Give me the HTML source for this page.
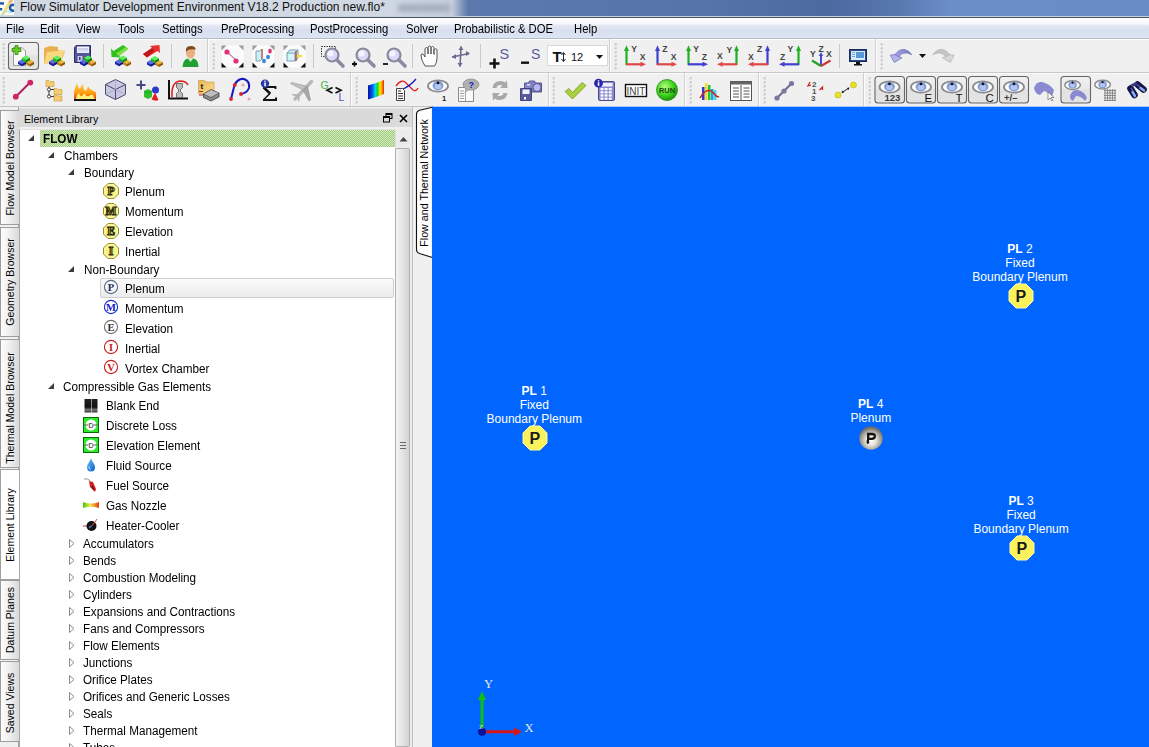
<!DOCTYPE html>
<html><head><meta charset="utf-8"><style>
*{box-sizing:border-box;margin:0;padding:0}
html,body{width:1149px;height:747px;overflow:hidden;background:#f0f0f0;font-family:"Liberation Sans",sans-serif;font-size:12px;color:#000;position:relative}
.a{position:absolute}
svg{position:absolute;overflow:visible}
#title{left:0;top:0;width:1149px;height:18px;background:linear-gradient(90deg,#d2dae4 0px,#d0d8e3 385px,#c6cfdc 452px,#8ea2c2 460px,#5b79ad 468px,#5574aa 700px,#4a6aa0 830px,#5878b0 900px,#6c8ec6 950px,#6a8cc4 1149px);}
#title .t{left:20px;top:0px;font:12px/14px "Liberation Sans";color:#111;white-space:nowrap}
#tline{left:0;top:16px;width:1149px;height:2px;background:linear-gradient(#c6d2e4 0 1px,#4a525c 1px 2px)}
#menu{left:0;top:18px;width:1149px;height:21px;background:linear-gradient(#ffffff 0px,#f6f8fb 6px,#e4e9f3 7px,#d8dfee 12px,#dce3f2 19px,#dee5f3 20px);border-bottom:1px solid #b4b9c6;box-shadow:0 1px 0 #ffffff}
#menu span{position:absolute;top:3.5px;font:12px/14px "Liberation Sans";white-space:nowrap;transform:scaleX(0.94);transform-origin:0 0}
.tb{background:#f0f0f0}
.vsep{position:absolute;width:1px;background:#c9c9c9}
.gb{position:absolute;width:2px;border-left:1px solid #d2d2d2;border-right:1px solid #fbfbfb}
.grip{position:absolute;width:3px;background:repeating-linear-gradient(180deg,#a0a0a0 0 2px,transparent 2px 4px)}
.pbtn{position:absolute;border:1px solid #777;border-radius:3px;background:linear-gradient(#f6f6f6,#dcdcdc)}
.vtab{position:absolute;left:0px;width:18.5px;border:1px solid #9c9c9c;border-right:none;background:linear-gradient(90deg,#fdfdfd 0%,#eeeeee 50%,#d9d9d9 100%)}
.vtab span{position:absolute;left:50%;top:50%;transform:translate(-50%,-50%) rotate(-90deg);white-space:nowrap;font:10.5px/12px "Liberation Sans"}
.row{position:absolute;white-space:nowrap;font:12.3px/14px "Liberation Sans";transform:scaleX(0.951);transform-origin:0 0}
.lbl{position:absolute;color:#fff;font:12px/14px "Liberation Sans";text-align:center;white-space:nowrap;width:200px}
</style></head><body>
<div id="title" class="a"><span class="a t">Flow Simulator Development Environment V18.2 Production new.flo*</span></div>
<svg style="left:0;top:0" width="14" height="16" viewBox="0 0 14 16"><rect x="0" y="0" width="14" height="15" fill="#fbfaf0"/><path d="M9.5 0 L13 0 L4 15 L1 15Z" fill="#f4d86a" opacity="0.9"/><path d="M10 0 h3 l-2 3 h-3z" fill="#f0b080"/><rect x="0" y="2.2" width="4" height="2.4" fill="#1a5aa8"/><rect x="0" y="8" width="2.2" height="2.4" fill="#1a5aa8"/><path d="M14 5.2 Q10.5 4 10 7.8 Q10.5 11.4 14 10.4" stroke="#1a5aa8" stroke-width="2.6" fill="none"/><path d="M1 15 L5 11 L12 13" stroke="#9ae0f0" stroke-width="1" fill="none"/></svg>
<div class="a" style="left:398px;top:4px;width:52px;height:8px;background:#9aa6b8;filter:blur(2.5px);opacity:0.8"></div>
<div id="tline" class="a"></div>
<div id="menu" class="a"><span style="left:6px">File</span><span style="left:40px">Edit</span><span style="left:76px">View</span><span style="left:117.5px">Tools</span><span style="left:162.4px">Settings</span><span style="left:220.6px">PreProcessing</span><span style="left:310px">PostProcessing</span><span style="left:406px">Solver</span><span style="left:454px">Probabilistic &amp; DOE</span><span style="left:574px">Help</span></div>
<div class="a tb" style="left:0;top:40px;width:1149px;height:33px;border-bottom:1px solid #c8c8c8"></div>
<div class="a tb" style="left:0;top:73px;width:1149px;height:34px;border-bottom:1px solid #c4c4c4;border-top:1px solid #fcfcfc"></div><div class="a" style="left:432px;top:106px;width:717px;height:1px;background:#a8ccff"></div>
<svg style="left:0;top:38px" width="1149" height="69" viewBox="0 38 1149 69">
<defs><linearGradient id="pg" x1="0" y1="0" x2="0" y2="1"><stop offset="0" stop-color="#f0f0f0"/><stop offset="0.45" stop-color="#ebebeb"/><stop offset="0.5" stop-color="#e2e2e2"/><stop offset="1" stop-color="#e4e4e4"/></linearGradient><linearGradient id="fold" x1="0" y1="0" x2="1" y2="1"><stop offset="0" stop-color="#e8b45a"/><stop offset="1" stop-color="#fbe08a"/></linearGradient><linearGradient id="spec" x1="0" y1="0" x2="1" y2="0"><stop offset="0" stop-color="#0010a0"/><stop offset="0.3" stop-color="#0060ff"/><stop offset="0.45" stop-color="#00e0e0"/><stop offset="0.6" stop-color="#20d020"/><stop offset="0.75" stop-color="#f0f000"/><stop offset="0.9" stop-color="#ff8000"/><stop offset="1" stop-color="#e02000"/></linearGradient><radialGradient id="run" cx="0.4" cy="0.35" r="0.7"><stop offset="0" stop-color="#b8ff80"/><stop offset="0.6" stop-color="#3ad01a"/><stop offset="1" stop-color="#1a8a0a"/></radialGradient><linearGradient id="fire" x1="0" y1="0" x2="0" y2="1"><stop offset="0" stop-color="#ffd040"/><stop offset="0.6" stop-color="#ff9a10"/><stop offset="1" stop-color="#e03a00"/></linearGradient><linearGradient id="und" x1="0" y1="0" x2="1" y2="0"><stop offset="0" stop-color="#a8a8e8"/><stop offset="1" stop-color="#7878c0"/></linearGradient></defs>
<rect x="2.5" y="43.5" width="2" height="2" fill="#d2d2d2"/><rect x="3.5" y="43.5" width="1" height="1" fill="#a4a4a4"/><rect x="2.5" y="47.5" width="2" height="2" fill="#d2d2d2"/><rect x="3.5" y="47.5" width="1" height="1" fill="#a4a4a4"/><rect x="2.5" y="51.5" width="2" height="2" fill="#d2d2d2"/><rect x="3.5" y="51.5" width="1" height="1" fill="#a4a4a4"/><rect x="2.5" y="55.5" width="2" height="2" fill="#d2d2d2"/><rect x="3.5" y="55.5" width="1" height="1" fill="#a4a4a4"/><rect x="2.5" y="59.5" width="2" height="2" fill="#d2d2d2"/><rect x="3.5" y="59.5" width="1" height="1" fill="#a4a4a4"/><rect x="2.5" y="63.5" width="2" height="2" fill="#d2d2d2"/><rect x="3.5" y="63.5" width="1" height="1" fill="#a4a4a4"/><rect x="2.5" y="67.5" width="2" height="2" fill="#d2d2d2"/><rect x="3.5" y="67.5" width="1" height="1" fill="#a4a4a4"/>
<rect x="8.5" y="42.5" width="30" height="27" rx="3" fill="url(#pg)" stroke="#666" stroke-width="1.1"/>
<path d="M13.5 47.5 H22 L25.5 51 V65.5 H13.5Z" fill="#fafafa" stroke="#9a9a9a" stroke-width="1"/>
<path d="M15 45.5 h3 v3 h3 v3 h-3 v3 h-3 v-3 h-3 v-3 h3z" fill="#66cc22" stroke="#3a8a10" stroke-width="0.8"/>
<g transform="translate(18,55.5)"><path d="M0 6.0 L4 3.8 L8 6.0 L4 8.2Z" fill="#5a6af0"/><path d="M0 6.0 V8.6 L4 10.8 V8.2Z" fill="#1a22b0"/><path d="M8 6.0 V8.6 L4 10.8 V8.2Z" fill="#10188a"/><path d="M8 6.2 L12 4 L16 6.2 L12 8.4Z" fill="#f2b440"/><path d="M8 6.2 V8.8 L12 11 V8.4Z" fill="#c07810"/><path d="M16 6.2 V8.8 L12 11 V8.4Z" fill="#8a5a08"/><path d="M4 2.2 L8 0 L12 2.2 L8 4.4Z" fill="#5cf05c"/><path d="M4 2.2 V4.8 L8 7 V4.4Z" fill="#18b818"/><path d="M12 2.2 V4.8 L8 7 V4.4Z" fill="#0e860e"/></g>
<path d="M44 48 L50 46 L58 47 V50 L65 52 L60 64 H44Z" fill="#e8b050"/><path d="M47 52 L65 50 L60 64 H44Z" fill="#f8d880"/>
<g transform="translate(49,55.5)"><path d="M0 6.0 L4 3.8 L8 6.0 L4 8.2Z" fill="#5a6af0"/><path d="M0 6.0 V8.6 L4 10.8 V8.2Z" fill="#1a22b0"/><path d="M8 6.0 V8.6 L4 10.8 V8.2Z" fill="#10188a"/><path d="M8 6.2 L12 4 L16 6.2 L12 8.4Z" fill="#f2b440"/><path d="M8 6.2 V8.8 L12 11 V8.4Z" fill="#c07810"/><path d="M16 6.2 V8.8 L12 11 V8.4Z" fill="#8a5a08"/><path d="M4 2.2 L8 0 L12 2.2 L8 4.4Z" fill="#5cf05c"/><path d="M4 2.2 V4.8 L8 7 V4.4Z" fill="#18b818"/><path d="M12 2.2 V4.8 L8 7 V4.4Z" fill="#0e860e"/></g>
<path d="M74.5 47.5 L76 45.5 H90.5 V62.5 H74.5Z" fill="#545498" stroke="#2e2e6a" stroke-width="1"/><rect x="77" y="46.5" width="12" height="6.5" fill="#f2f2ff"/><rect x="78" y="48.5" width="10" height="1" fill="#a8a8d8"/><rect x="78" y="50.5" width="10" height="1" fill="#c8c8e8"/><rect x="77.5" y="56" width="5" height="6" fill="#c8c8e0"/><rect x="79" y="57" width="1.5" height="3" fill="#3a3a78"/>
<g transform="translate(80,55.5)"><path d="M0 6.0 L4 3.8 L8 6.0 L4 8.2Z" fill="#5a6af0"/><path d="M0 6.0 V8.6 L4 10.8 V8.2Z" fill="#1a22b0"/><path d="M8 6.0 V8.6 L4 10.8 V8.2Z" fill="#10188a"/><path d="M8 6.2 L12 4 L16 6.2 L12 8.4Z" fill="#f2b440"/><path d="M8 6.2 V8.8 L12 11 V8.4Z" fill="#c07810"/><path d="M16 6.2 V8.8 L12 11 V8.4Z" fill="#8a5a08"/><path d="M4 2.2 L8 0 L12 2.2 L8 4.4Z" fill="#5cf05c"/><path d="M4 2.2 V4.8 L8 7 V4.4Z" fill="#18b818"/><path d="M12 2.2 V4.8 L8 7 V4.4Z" fill="#0e860e"/></g>
<rect x="103" y="44" width="1" height="24" fill="#c8c8c8"/>
<path d="M126 47 L128 49 L119 56 L121.5 57.5 L111.5 57 L111 48.5 L113.5 51 L123 45Z" fill="#30c020"/><path d="M126 47 L128 49 L119 56 L116 53.5Z" fill="#80e040"/>
<g transform="translate(115,55.5)"><path d="M0 6.0 L4 3.8 L8 6.0 L4 8.2Z" fill="#5a6af0"/><path d="M0 6.0 V8.6 L4 10.8 V8.2Z" fill="#1a22b0"/><path d="M8 6.0 V8.6 L4 10.8 V8.2Z" fill="#10188a"/><path d="M8 6.2 L12 4 L16 6.2 L12 8.4Z" fill="#f2b440"/><path d="M8 6.2 V8.8 L12 11 V8.4Z" fill="#c07810"/><path d="M16 6.2 V8.8 L12 11 V8.4Z" fill="#8a5a08"/><path d="M4 2.2 L8 0 L12 2.2 L8 4.4Z" fill="#5cf05c"/><path d="M4 2.2 V4.8 L8 7 V4.4Z" fill="#18b818"/><path d="M12 2.2 V4.8 L8 7 V4.4Z" fill="#0e860e"/></g>
<path d="M143 54 L152 48 L150 46 L159.5 45 L160 53 L157.5 51 L147 57.5Z" fill="#e83030"/><path d="M143 54 L152 48 L154.5 50.5 L147 57.5Z" fill="#c01818"/>
<g transform="translate(147,56)"><path d="M0 6.0 L4 3.8 L8 6.0 L4 8.2Z" fill="#5a6af0"/><path d="M0 6.0 V8.6 L4 10.8 V8.2Z" fill="#1a22b0"/><path d="M8 6.0 V8.6 L4 10.8 V8.2Z" fill="#10188a"/><path d="M8 6.2 L12 4 L16 6.2 L12 8.4Z" fill="#f2b440"/><path d="M8 6.2 V8.8 L12 11 V8.4Z" fill="#c07810"/><path d="M16 6.2 V8.8 L12 11 V8.4Z" fill="#8a5a08"/><path d="M4 2.2 L8 0 L12 2.2 L8 4.4Z" fill="#5cf05c"/><path d="M4 2.2 V4.8 L8 7 V4.4Z" fill="#18b818"/><path d="M12 2.2 V4.8 L8 7 V4.4Z" fill="#0e860e"/></g>
<rect x="171" y="44" width="1" height="24" fill="#c8c8c8"/>
<ellipse cx="190.5" cy="53" rx="4.6" ry="5.4" fill="#e8b080"/><path d="M186 52 Q185 46 190.5 46 Q196 46 195.5 50 Q193 48.5 188 50Z" fill="#7a4a20"/>
<path d="M182.5 67 Q183 59 188 58.5 L190.5 61 L193 58.5 Q198.5 59 198.5 67Z" fill="#20a030"/><path d="M188 58.5 L190.5 62 L193 58.5Z" fill="#c8f0c8"/>
<rect x="207" y="39" width="1" height="33" fill="#cfcfcf"/><rect x="208" y="39" width="1" height="33" fill="#fdfdfd"/>
<rect x="212.5" y="43.5" width="2" height="2" fill="#d2d2d2"/><rect x="213.5" y="43.5" width="1" height="1" fill="#a4a4a4"/><rect x="212.5" y="47.5" width="2" height="2" fill="#d2d2d2"/><rect x="213.5" y="47.5" width="1" height="1" fill="#a4a4a4"/><rect x="212.5" y="51.5" width="2" height="2" fill="#d2d2d2"/><rect x="213.5" y="51.5" width="1" height="1" fill="#a4a4a4"/><rect x="212.5" y="55.5" width="2" height="2" fill="#d2d2d2"/><rect x="213.5" y="55.5" width="1" height="1" fill="#a4a4a4"/><rect x="212.5" y="59.5" width="2" height="2" fill="#d2d2d2"/><rect x="213.5" y="59.5" width="1" height="1" fill="#a4a4a4"/><rect x="212.5" y="63.5" width="2" height="2" fill="#d2d2d2"/><rect x="213.5" y="63.5" width="1" height="1" fill="#a4a4a4"/><rect x="212.5" y="67.5" width="2" height="2" fill="#d2d2d2"/><rect x="213.5" y="67.5" width="1" height="1" fill="#a4a4a4"/>
<g transform="translate(221,45)"><rect x="0.5" y="0.5" width="22" height="22" fill="#fbfbfb"/><path d="M0.5 0.5h5l-5 5z" fill="#9a9a9a"/><path d="M22.5 0.5h-5l5 5z" fill="#9a9a9a"/><path d="M0.5 22.5h5l-5-5z" fill="#111"/><path d="M22.5 22.5h-5l5-5z" fill="#111"/></g>
<path d="M226 51 L237 61" stroke="#a04070" stroke-width="1"/><circle cx="227" cy="52" r="2.6" fill="#e0307a"/><circle cx="236" cy="61" r="2.6" fill="#e0307a"/>
<g transform="translate(252,45)"><rect x="0.5" y="0.5" width="22" height="22" fill="#fbfbfb"/><path d="M0.5 0.5h5l-5 5z" fill="#9a9a9a"/><path d="M22.5 0.5h-5l5 5z" fill="#9a9a9a"/><path d="M0.5 22.5h5l-5-5z" fill="#111"/><path d="M22.5 22.5h-5l5-5z" fill="#111"/></g>
<path d="M256 51 h4 l2 -2 v10 l-2 2 h-4z" fill="#c8f0f8" stroke="#6a8aa0" stroke-width="0.8"/><path d="M262 49 v10" stroke="#d04020" stroke-width="1"/><ellipse cx="270" cy="51" rx="1.8" ry="2.5" fill="#e0307a"/><ellipse cx="268" cy="57" rx="2" ry="2.3" fill="#3a8ae0"/><ellipse cx="264" cy="61" rx="2" ry="2.3" fill="#3a8ae0"/>
<g transform="translate(283,45)"><rect x="0.5" y="0.5" width="22" height="22" fill="#fbfbfb"/><path d="M0.5 0.5h5l-5 5z" fill="#9a9a9a"/><path d="M22.5 0.5h-5l5 5z" fill="#9a9a9a"/><path d="M0.5 22.5h5l-5-5z" fill="#111"/><path d="M22.5 22.5h-5l5-5z" fill="#111"/></g>
<path d="M287 53 l3 -3 h8 v8 l-3 3 h-8z" fill="#d0f4fa" stroke="#5a8aa0" stroke-width="0.8"/><path d="M287 53 h8 v8 M295 53 l3 -3" stroke="#5a8aa0" stroke-width="0.8" fill="none"/><path d="M296 51 v10" stroke="#d02020" stroke-width="1.2"/><path d="M297 55 h4 l2 1 l-2 1 h-4" fill="#f0e020"/>
<rect x="313" y="44" width="1" height="24" fill="#c8c8c8"/>
<rect x="321.5" y="46.5" width="14" height="10" fill="none" stroke="#222" stroke-width="1" stroke-dasharray="1.3 1.2"/>
<g transform="translate(323,46)"><circle cx="9" cy="9" r="6.5" fill="#d8d8f8" stroke="#8a8a9a" stroke-width="2.2"/><circle cx="7.5" cy="7.5" r="3" fill="#f4f4ff"/><path d="M14 14 L20 20" stroke="#8a8aa0" stroke-width="3.6" stroke-linecap="round"/></g>
<g transform="translate(354,46)"><circle cx="9" cy="9" r="6.5" fill="#d8d8f8" stroke="#8a8a9a" stroke-width="2.2"/><circle cx="7.5" cy="7.5" r="3" fill="#f4f4ff"/><path d="M14 14 L20 20" stroke="#8a8aa0" stroke-width="3.6" stroke-linecap="round"/></g>
<path d="M352 64 h5 M354.5 61.5 v5" stroke="#111" stroke-width="1.8"/>
<g transform="translate(385,46)"><circle cx="9" cy="9" r="6.5" fill="#d8d8f8" stroke="#8a8a9a" stroke-width="2.2"/><circle cx="7.5" cy="7.5" r="3" fill="#f4f4ff"/><path d="M14 14 L20 20" stroke="#8a8aa0" stroke-width="3.6" stroke-linecap="round"/></g>
<path d="M383 64 h5" stroke="#111" stroke-width="1.8"/>
<rect x="412" y="44" width="1" height="24" fill="#c8c8c8"/>
<path d="M425 66 Q421 60 421 55 Q421.5 53 423.5 54.5 L425 57 V48.5 Q426.5 46.5 428 48.5 V54 V47 Q429.5 45 431 47 V54 V47.5 Q432.5 45.5 434 47.5 V54.5 V49.5 Q435.5 48 437 49.5 V58 Q437 63 434.5 66Z" fill="#fff" stroke="#555" stroke-width="1"/>
<path d="M452 57 L469 53.5 M461 46.5 L460 66.5" stroke="#6a6a90" stroke-width="1.6"/><path d="M452 57 l4 -3 v5z M470 53.5 l-4 -2.5 v5z M461 46 l-2.5 4 h5z M460 67 l-2.5 -4 h5z" fill="#6a6a90"/>
<rect x="480" y="44" width="1" height="24" fill="#c8c8c8"/>
<path d="M489.5 63.5 h10 M494.5 58.5 v10" stroke="#111" stroke-width="2.6"/><text x="499.5" y="58.5" font-family="Liberation Sans" font-size="14.5" fill="#5a5aa0">S</text>
<path d="M521 62.7 h8" stroke="#111" stroke-width="2.4"/><text x="531" y="58.5" font-family="Liberation Sans" font-size="14" fill="#5a5aa0">S</text>
<rect x="547.5" y="45.5" width="60" height="20" fill="#fff" stroke="#d8d8d8" stroke-width="1"/>
<text x="552.5" y="62" font-family="Liberation Sans" font-weight="bold" font-size="15" fill="#111">T</text><path d="M563.5 53 v8 M561.5 55 l2 -2.5 l2 2.5 M561.5 59 l2 2.5 l2 -2.5" stroke="#111" stroke-width="0.9" fill="none"/>
<text x="571" y="61" font-family="Liberation Sans" font-size="11" fill="#111">12</text><path d="M596 55 h7 l-3.5 4z" fill="#111"/>
<rect x="609" y="39" width="1" height="33" fill="#cfcfcf"/><rect x="610" y="39" width="1" height="33" fill="#fdfdfd"/>
<rect x="614.5" y="43.5" width="2" height="2" fill="#d2d2d2"/><rect x="615.5" y="43.5" width="1" height="1" fill="#a4a4a4"/><rect x="614.5" y="47.5" width="2" height="2" fill="#d2d2d2"/><rect x="615.5" y="47.5" width="1" height="1" fill="#a4a4a4"/><rect x="614.5" y="51.5" width="2" height="2" fill="#d2d2d2"/><rect x="615.5" y="51.5" width="1" height="1" fill="#a4a4a4"/><rect x="614.5" y="55.5" width="2" height="2" fill="#d2d2d2"/><rect x="615.5" y="55.5" width="1" height="1" fill="#a4a4a4"/><rect x="614.5" y="59.5" width="2" height="2" fill="#d2d2d2"/><rect x="615.5" y="59.5" width="1" height="1" fill="#a4a4a4"/><rect x="614.5" y="63.5" width="2" height="2" fill="#d2d2d2"/><rect x="615.5" y="63.5" width="1" height="1" fill="#a4a4a4"/><rect x="614.5" y="67.5" width="2" height="2" fill="#d2d2d2"/><rect x="615.5" y="67.5" width="1" height="1" fill="#a4a4a4"/>
<g transform="translate(624,45)"><path d="M2.5 4 V20" stroke="#20b020" stroke-width="2.2"/><path d="M0 6 L2.5 0.3 L5 6Z" fill="#20b020"/><path d="M2 19.3 H18" stroke="#e04848" stroke-width="2.2"/><path d="M16.5 16.8 L22 19.3 L16.5 21.8Z" fill="#e04848"/><text x="7.2" y="6.6" font-family="Liberation Sans" font-weight="bold" font-size="8.6" fill="#444">Y</text><text x="15.8" y="15" font-family="Liberation Sans" font-weight="bold" font-size="8.6" fill="#444">X</text></g>
<g transform="translate(655,45)"><path d="M2.5 4 V20" stroke="#4040d0" stroke-width="2.2"/><path d="M0 6 L2.5 0.3 L5 6Z" fill="#4040d0"/><path d="M2 19.3 H18" stroke="#e04848" stroke-width="2.2"/><path d="M16.5 16.8 L22 19.3 L16.5 21.8Z" fill="#e04848"/><text x="7.2" y="6.6" font-family="Liberation Sans" font-weight="bold" font-size="8.6" fill="#444">Z</text><text x="15.8" y="15" font-family="Liberation Sans" font-weight="bold" font-size="8.6" fill="#444">X</text></g>
<g transform="translate(686,45)"><path d="M2.5 4 V20" stroke="#20b020" stroke-width="2.2"/><path d="M0 6 L2.5 0.3 L5 6Z" fill="#20b020"/><path d="M2 19.3 H18" stroke="#4040d0" stroke-width="2.2"/><path d="M16.5 16.8 L22 19.3 L16.5 21.8Z" fill="#4040d0"/><text x="7.2" y="6.6" font-family="Liberation Sans" font-weight="bold" font-size="8.6" fill="#444">Y</text><text x="15.8" y="15" font-family="Liberation Sans" font-weight="bold" font-size="8.6" fill="#444">Z</text></g>
<g transform="translate(717,45)"><path d="M19.5 4 V20" stroke="#20b020" stroke-width="2.2"/><path d="M17 6 L19.5 0.3 L22 6Z" fill="#20b020"/><path d="M4 19.3 H20" stroke="#e04848" stroke-width="2.2"/><path d="M5.5 16.8 L0 19.3 L5.5 21.8Z" fill="#e04848"/><text x="9.5" y="7.6" font-family="Liberation Sans" font-weight="bold" font-size="8.6" fill="#444">Y</text><text x="0" y="14.3" font-family="Liberation Sans" font-weight="bold" font-size="8.6" fill="#444">X</text></g>
<g transform="translate(748,45)"><path d="M19.5 4 V20" stroke="#4040d0" stroke-width="2.2"/><path d="M17 6 L19.5 0.3 L22 6Z" fill="#4040d0"/><path d="M4 19.3 H20" stroke="#e04848" stroke-width="2.2"/><path d="M5.5 16.8 L0 19.3 L5.5 21.8Z" fill="#e04848"/><text x="9" y="6.6" font-family="Liberation Sans" font-weight="bold" font-size="8.6" fill="#444">Z</text><text x="0" y="15" font-family="Liberation Sans" font-weight="bold" font-size="8.6" fill="#444">X</text></g>
<g transform="translate(779,45)"><path d="M19.5 4 V20" stroke="#20b020" stroke-width="2.2"/><path d="M17 6 L19.5 0.3 L22 6Z" fill="#20b020"/><path d="M4 19.3 H20" stroke="#4040d0" stroke-width="2.2"/><path d="M5.5 16.8 L0 19.3 L5.5 21.8Z" fill="#4040d0"/><text x="8.5" y="6.6" font-family="Liberation Sans" font-weight="bold" font-size="8.6" fill="#444">Y</text><text x="1" y="14.6" font-family="Liberation Sans" font-weight="bold" font-size="8.6" fill="#444">Z</text></g>
<g transform="translate(810,45)"><path d="M11 21 V10" stroke="#4848d8" stroke-width="2"/><path d="M8.8 11 L11 7 L13.2 11Z" fill="#4848d8"/><path d="M11 21 L2 15.5" stroke="#20a020" stroke-width="2.2"/><path d="M11 21 L20.5 15.5" stroke="#d03838" stroke-width="2.2"/><text x="0" y="12" font-family="Liberation Sans" font-weight="bold" font-size="8.6" fill="#444">Y</text><text x="8.5" y="7" font-family="Liberation Sans" font-weight="bold" font-size="8.6" fill="#444">Z</text><text x="16" y="12" font-family="Liberation Sans" font-weight="bold" font-size="8.6" fill="#444">X</text></g>
<rect x="839" y="44" width="1" height="24" fill="#c8c8c8"/>
<rect x="849.5" y="49.5" width="17" height="12" fill="#2a4a8a" stroke="#1a2a5a"/><rect x="851" y="51" width="14" height="9" fill="#d8ecfa"/><rect x="856" y="52" width="8" height="6" fill="#5a9ad8"/><path d="M852 52.5h3M852 54.5h3M852 56.5h3" stroke="#5a9ad8" stroke-width="0.8"/><rect x="856" y="62" width="4" height="2" fill="#111"/><rect x="854" y="64" width="8" height="1.5" fill="#111"/>
<rect x="875" y="39" width="1" height="33" fill="#cfcfcf"/><rect x="876" y="39" width="1" height="33" fill="#fdfdfd"/>
<rect x="880.5" y="43.5" width="2" height="2" fill="#d2d2d2"/><rect x="881.5" y="43.5" width="1" height="1" fill="#a4a4a4"/><rect x="880.5" y="47.5" width="2" height="2" fill="#d2d2d2"/><rect x="881.5" y="47.5" width="1" height="1" fill="#a4a4a4"/><rect x="880.5" y="51.5" width="2" height="2" fill="#d2d2d2"/><rect x="881.5" y="51.5" width="1" height="1" fill="#a4a4a4"/><rect x="880.5" y="55.5" width="2" height="2" fill="#d2d2d2"/><rect x="881.5" y="55.5" width="1" height="1" fill="#a4a4a4"/><rect x="880.5" y="59.5" width="2" height="2" fill="#d2d2d2"/><rect x="881.5" y="59.5" width="1" height="1" fill="#a4a4a4"/><rect x="880.5" y="63.5" width="2" height="2" fill="#d2d2d2"/><rect x="881.5" y="63.5" width="1" height="1" fill="#a4a4a4"/><rect x="880.5" y="67.5" width="2" height="2" fill="#d2d2d2"/><rect x="881.5" y="67.5" width="1" height="1" fill="#a4a4a4"/>
<path d="M893.5 56.5 Q899 48 905 49.6 Q909.5 50.8 911.8 54.8 Q907 51.8 902.5 53.6 Q900 54.6 898.8 57.2Z" fill="url(#und)" stroke="#7070b8" stroke-width="0.6"/><path d="M890.3 55.2 L894.3 62.5 L902 57.8 L898 56.4 L895 54.6Z" fill="#b4b4ec" stroke="#6a6ab0" stroke-width="0.7"/>
<path d="M919 54 h7 l-3.5 4z" fill="#111"/>
<g transform="translate(1844.5,0) scale(-1,1)" opacity="1"><path d="M893.5 56.5 Q899 48 905 49.6 Q909.5 50.8 911.8 54.8 Q907 51.8 902.5 53.6 Q900 54.6 898.8 57.2Z" fill="#c4c4c4" stroke="#b0b0b0" stroke-width="0.6"/><path d="M890.3 55.2 L894.3 62.5 L902 57.8 L898 56.4 L895 54.6Z" fill="#d8d8d8" stroke="#b0b0b0" stroke-width="0.7"/></g>
<rect x="2.5" y="77.5" width="2" height="2" fill="#d2d2d2"/><rect x="3.5" y="77.5" width="1" height="1" fill="#a4a4a4"/><rect x="2.5" y="81.5" width="2" height="2" fill="#d2d2d2"/><rect x="3.5" y="81.5" width="1" height="1" fill="#a4a4a4"/><rect x="2.5" y="85.5" width="2" height="2" fill="#d2d2d2"/><rect x="3.5" y="85.5" width="1" height="1" fill="#a4a4a4"/><rect x="2.5" y="89.5" width="2" height="2" fill="#d2d2d2"/><rect x="3.5" y="89.5" width="1" height="1" fill="#a4a4a4"/><rect x="2.5" y="93.5" width="2" height="2" fill="#d2d2d2"/><rect x="3.5" y="93.5" width="1" height="1" fill="#a4a4a4"/><rect x="2.5" y="97.5" width="2" height="2" fill="#d2d2d2"/><rect x="3.5" y="97.5" width="1" height="1" fill="#a4a4a4"/><rect x="2.5" y="101.5" width="2" height="2" fill="#d2d2d2"/><rect x="3.5" y="101.5" width="1" height="1" fill="#a4a4a4"/>
<path d="M16 96.5 L30 82.5" stroke="#b02060" stroke-width="2"/><circle cx="15.8" cy="96.7" r="2.9" fill="#d02468"/><circle cx="30.3" cy="82.6" r="2.9" fill="#d02468"/>
<path d="M49 85 V96.5 M49 89.5 H54 M49 96.5 H54" stroke="#333" stroke-width="1"/><circle cx="49" cy="89.5" r="1.6" fill="#fff" stroke="#333" stroke-width="0.9"/><circle cx="49" cy="96.5" r="1.6" fill="#fff" stroke="#333" stroke-width="0.9"/>
<path d="M46 80.5 h3 l1 1 h4 v5 h-8z" fill="#f4cc70" stroke="#c89840" stroke-width="0.6"/>
<path d="M54 88.5 h3 l1 1 h4 v5 h-8z" fill="#f4cc70" stroke="#c89840" stroke-width="0.6"/>
<path d="M54 95.0 h3 l1 1 h4 v5 h-8z" fill="#f4cc70" stroke="#c89840" stroke-width="0.6"/>
<path d="M74 100 V92 Q75 87 77 83 Q78 88 80 89 Q81 85 83 84 Q83 90 86 91 Q88 88 88 86 Q90 90 92 90 Q94 92 96 92 V100Z" fill="url(#fire)"/><path d="M76 99 Q77 94 79 93 Q80 97 82 96 Q84 93 85 94 Q86 97 89 96 Q91 94 93 95 Q94 98 95 99Z" fill="#fff080"/><rect x="74" y="99" width="22" height="2" fill="#111"/>
<path d="M115.5 79.5 L125.5 84.5 V94.5 L115.5 99.5 L105.5 94.5 V84.5Z" fill="#c8c8e0" stroke="#4a4a72" stroke-width="1"/><path d="M105.5 84.5 L115.5 89.5 L125.5 84.5 M115.5 89.5 V99.5" stroke="#4a4a72" stroke-width="1" fill="none"/><path d="M115.5 79.5 V89.5 L105.5 94.5 M115.5 89.5 L125.5 94.5" stroke="#9a9ac0" stroke-width="0.6" fill="none"/>
<path d="M136.5 85 h9 M141 80.5 v9" stroke="#4a4a80" stroke-width="2"/><path d="M144 91 l4 -2 l4 2 v6 l-4 2 l-4 -2z" fill="#30c030"/><path d="M144 91 l4 2 l4 -2" stroke="#1a8a1a" fill="none" stroke-width="0.6"/><circle cx="155.5" cy="90" r="3.5" fill="#2a3ad0"/><path d="M155 92.5 L158.5 100 Q155.5 101.5 151.5 99.5Z" fill="#e02020"/>
<path d="M169 80 V98.5 H188" stroke="#111" stroke-width="2" fill="none"/><path d="M172 97 Q171 82 180 81 Q186 81 188 85" stroke="#e02020" stroke-width="1.6" fill="none"/><path d="M176.5 83.5 h6 v4 l-2 2 v2 l2 2 v4 h-6 v-4 l2 -2 v-2 l-2 -2z" fill="#bcbcbc" stroke="#555" stroke-width="0.8"/>
<path d="M198.5 80.5 h6 l1.5 1.5 h8 v12 h-15.5z" fill="url(#fold)" stroke="#c8a050" stroke-width="0.7"/><text x="200.5" y="89" font-family="Liberation Sans" font-weight="bold" font-size="8" fill="#111">t</text><path d="M199 91.5 h4 M199 95 h4" stroke="#b01818" stroke-width="0.9"/><path d="M203.5 94 L211 89.5 L219 93 V97 L211 101 L203.5 97.5Z" fill="#8a8a8a" stroke="#3a3a3a" stroke-width="0.8"/><path d="M203.5 94 L211 97.5 L219 93" stroke="#3a3a3a" fill="none" stroke-width="0.6"/><path d="M204 94 L211 90 L218.5 93 L211 97Z" fill="#bdbdbd"/>
<path d="M231 99 L234.5 85 Q238 78 244 79 Q250 81 249 88 Q247 93 241 94" stroke="#1818c0" stroke-width="2" fill="none"/><circle cx="231" cy="99" r="1.9" fill="#e02030"/><circle cx="234.8" cy="85" r="1.9" fill="#e02030"/><circle cx="241" cy="94" r="1.9" fill="#e02030"/><circle cx="243" cy="85" r="1.5" fill="#f0a0a8"/><circle cx="249" cy="99" r="1.5" fill="#f0a0a8"/>
<path d="M263 87 H275.5 V89" stroke="#111" stroke-width="1.8" fill="none"/><path d="M263.5 87.3 L270.2 93.6" stroke="#111" stroke-width="2.6"/><path d="M270.2 93.3 L263.3 100" stroke="#111" stroke-width="1.5"/><path d="M263 100 H276 V97.5" stroke="#111" stroke-width="2" fill="none"/><circle cx="265" cy="83.6" r="4.2" fill="#2a38a8"/><rect x="264.3" y="82.5" width="1.5" height="3.8" fill="#fff"/><rect x="264.3" y="80.6" width="1.5" height="1.2" fill="#fff"/>
<path d="M295 99 L311.5 81.5" stroke="#b8b8b8" stroke-width="3.4" stroke-linecap="round"/><path d="M303 90 L290.5 83.6 L292 82.5 L306 86Z" fill="#c0c0c0" stroke="#9a9a9a" stroke-width="0.6"/><path d="M303 90 L309 101 L310.5 100 L307.5 86.5Z" fill="#a8a8a8" stroke="#8a8a8a" stroke-width="0.6"/><path d="M297 96.5 L291.5 95 L292.5 94 L298.5 94.5Z M297 96.5 L298.5 101.5 L299.5 101 L299.5 95Z" fill="#b0b0b0"/>
<text x="320.5" y="88.5" font-family="Liberation Sans" font-size="10.5" fill="#48b048">G</text><path d="M332.5 87.5 l-5.5 2.8 l5.5 2.8 M335.5 87.5 l5.5 2.8 l-5.5 2.8" stroke="#111" stroke-width="1.7" fill="none"/><text x="338.5" y="101" font-family="Liberation Sans" font-size="10.5" fill="#5050b0">L</text>
<rect x="350" y="73" width="1" height="33" fill="#cfcfcf"/><rect x="351" y="73" width="1" height="33" fill="#fdfdfd"/>
<rect x="355.5" y="77.5" width="2" height="2" fill="#d2d2d2"/><rect x="356.5" y="77.5" width="1" height="1" fill="#a4a4a4"/><rect x="355.5" y="81.5" width="2" height="2" fill="#d2d2d2"/><rect x="356.5" y="81.5" width="1" height="1" fill="#a4a4a4"/><rect x="355.5" y="85.5" width="2" height="2" fill="#d2d2d2"/><rect x="356.5" y="85.5" width="1" height="1" fill="#a4a4a4"/><rect x="355.5" y="89.5" width="2" height="2" fill="#d2d2d2"/><rect x="356.5" y="89.5" width="1" height="1" fill="#a4a4a4"/><rect x="355.5" y="93.5" width="2" height="2" fill="#d2d2d2"/><rect x="356.5" y="93.5" width="1" height="1" fill="#a4a4a4"/><rect x="355.5" y="97.5" width="2" height="2" fill="#d2d2d2"/><rect x="356.5" y="97.5" width="1" height="1" fill="#a4a4a4"/><rect x="355.5" y="101.5" width="2" height="2" fill="#d2d2d2"/><rect x="356.5" y="101.5" width="1" height="1" fill="#a4a4a4"/>
<path d="M368 85.5 Q377 83 384 80 V94 Q377 97 368 99.5Z" fill="url(#spec)"/>
<path d="M396 86 Q401 79 405 82 Q409 86 413 90 Q416 92 418 88" stroke="#e02020" stroke-width="1.4" fill="none"/><path d="M403 89 Q410 86 416 79" stroke="#1818c0" stroke-width="1.3" fill="none"/><path d="M396.5 88.5 h6 l2 2 v10 h-8z" fill="#fafafa" stroke="#444" stroke-width="1"/><path d="M398 91h3M398 93.5h5M398 96h5M398 98.5h5" stroke="#222" stroke-width="0.9"/>
<g transform="translate(427,79.5) scale(1.0)"><ellipse cx="11" cy="6.5" rx="10" ry="5.6" fill="#fff" stroke="#8c8c8c" stroke-width="1.9"/><ellipse cx="11" cy="6.3" rx="5.4" ry="4.7" fill="#7f9ad8"/><ellipse cx="11" cy="7" rx="3.4" ry="2.8" fill="#b4c4ec"/><circle cx="11" cy="3.4" r="1.4" fill="#111"/></g>
<text x="442" y="100.5" font-family="Liberation Sans" font-weight="bold" font-size="7.5" fill="#222">1</text>
<path d="M458.5 87.5 h15 v14 h-15z" fill="#fafafa" stroke="#8a8a8a" stroke-width="1"/><path d="M465.5 87.5 v14" stroke="#8a8a8a" stroke-width="0.8"/><path d="M460 91h4M460 93.5h4M460 96h4M460 98.5h4" stroke="#8a8a8a" stroke-width="0.8"/><ellipse cx="471" cy="84.5" rx="8" ry="5.5" fill="#b0b0b0" stroke="#8a8a8a" stroke-width="0.8"/><path d="M467 89 l-3 4 l6 -3z" fill="#b0b0b0"/><text x="468.5" y="88" font-family="Liberation Sans" font-weight="bold" font-size="9" fill="#1a1ac0">?</text>
<path d="M492.5 88 Q493.5 81 500.5 81 Q503.5 81 505 82.5 L507 80.5 L507.5 88 L500 88 L502.5 85.5 Q501.5 85 500.5 85 Q497 85 496.5 88Z" fill="#a8a8a8"/><path d="M507.5 93 Q506.5 100 499.5 100 Q496.5 100 495 98.5 L493 100.5 L492.5 93 L500 93 L497.5 95.5 Q498.5 96 499.5 96 Q503 96 503.5 93Z" fill="#a8a8a8"/>
<path d="M524.5 83 h4 l1 -2 h5 l1 2 h6 v9 h-17z" fill="#8484c8" stroke="#4a4a8a" stroke-width="0.9"/><circle cx="537" cy="87.5" r="4" fill="#b8b8f0" stroke="#4a4a8a" stroke-width="0.9"/><rect x="527" y="84" width="3" height="1.5" fill="#e0e0ff"/><path d="M520.5 88.5 h11 v12 h-11z" fill="#5a5a9a" stroke="#3a3a78" stroke-width="0.9"/><rect x="522.5" y="89.5" width="7" height="4.5" fill="#f0f0ff"/><rect x="524" y="97" width="2" height="2.5" fill="#fff"/>
<rect x="548" y="73" width="1" height="33" fill="#cfcfcf"/><rect x="549" y="73" width="1" height="33" fill="#fdfdfd"/>
<rect x="552.5" y="77.5" width="2" height="2" fill="#d2d2d2"/><rect x="553.5" y="77.5" width="1" height="1" fill="#a4a4a4"/><rect x="552.5" y="81.5" width="2" height="2" fill="#d2d2d2"/><rect x="553.5" y="81.5" width="1" height="1" fill="#a4a4a4"/><rect x="552.5" y="85.5" width="2" height="2" fill="#d2d2d2"/><rect x="553.5" y="85.5" width="1" height="1" fill="#a4a4a4"/><rect x="552.5" y="89.5" width="2" height="2" fill="#d2d2d2"/><rect x="553.5" y="89.5" width="1" height="1" fill="#a4a4a4"/><rect x="552.5" y="93.5" width="2" height="2" fill="#d2d2d2"/><rect x="553.5" y="93.5" width="1" height="1" fill="#a4a4a4"/><rect x="552.5" y="97.5" width="2" height="2" fill="#d2d2d2"/><rect x="553.5" y="97.5" width="1" height="1" fill="#a4a4a4"/><rect x="552.5" y="101.5" width="2" height="2" fill="#d2d2d2"/><rect x="553.5" y="101.5" width="1" height="1" fill="#a4a4a4"/>
<path d="M565 91.5 L569 88.5 L572.5 92.5 L582 82.5 L586 85.5 L572.5 99Z" fill="#a8d040" stroke="#7a9a20" stroke-width="0.8"/>
<rect x="598.5" y="81.5" width="16" height="19" rx="1.5" fill="#8a8ad0" stroke="#4a4a88" stroke-width="1"/><rect x="600.5" y="83" width="12" height="3.5" fill="#f0f0ff"/>
<rect x="600.5" y="88.0" width="3" height="2.2" fill="#fff"/>
<rect x="604.6" y="88.0" width="3" height="2.2" fill="#fff"/>
<rect x="608.7" y="88.0" width="3" height="2.2" fill="#fff"/>
<rect x="600.5" y="91.2" width="3" height="2.2" fill="#fff"/>
<rect x="604.6" y="91.2" width="3" height="2.2" fill="#fff"/>
<rect x="608.7" y="91.2" width="3" height="2.2" fill="#fff"/>
<rect x="600.5" y="94.4" width="3" height="2.2" fill="#fff"/>
<rect x="604.6" y="94.4" width="3" height="2.2" fill="#fff"/>
<rect x="608.7" y="94.4" width="3" height="2.2" fill="#fff"/>
<rect x="600.5" y="97.6" width="3" height="2.2" fill="#fff"/>
<rect x="604.6" y="97.6" width="3" height="2.2" fill="#fff"/>
<rect x="608.7" y="97.6" width="3" height="2.2" fill="#fff"/>
<circle cx="598.5" cy="83.2" r="4.4" fill="#2a2aa8"/><rect x="597.8" y="82.3" width="1.5" height="3.6" fill="#fff"/><rect x="597.8" y="80.3" width="1.5" height="1.2" fill="#fff"/>
<rect x="625.5" y="84.5" width="21" height="12" fill="#fff" stroke="#111" stroke-width="1.4"/><text x="636" y="94.5" text-anchor="middle" font-family="Liberation Sans" font-size="10" fill="#444">INIT</text>
<circle cx="667" cy="90" r="10.5" fill="url(#run)" stroke="#2a8a1a" stroke-width="0.8"/><text x="667" y="93" text-anchor="middle" font-family="Liberation Sans" font-weight="bold" font-size="7.5" fill="#1a4a10">RUN</text>
<rect x="684" y="73" width="1" height="33" fill="#cfcfcf"/><rect x="685" y="73" width="1" height="33" fill="#fdfdfd"/>
<rect x="689.5" y="77.5" width="2" height="2" fill="#d2d2d2"/><rect x="690.5" y="77.5" width="1" height="1" fill="#a4a4a4"/><rect x="689.5" y="81.5" width="2" height="2" fill="#d2d2d2"/><rect x="690.5" y="81.5" width="1" height="1" fill="#a4a4a4"/><rect x="689.5" y="85.5" width="2" height="2" fill="#d2d2d2"/><rect x="690.5" y="85.5" width="1" height="1" fill="#a4a4a4"/><rect x="689.5" y="89.5" width="2" height="2" fill="#d2d2d2"/><rect x="690.5" y="89.5" width="1" height="1" fill="#a4a4a4"/><rect x="689.5" y="93.5" width="2" height="2" fill="#d2d2d2"/><rect x="690.5" y="93.5" width="1" height="1" fill="#a4a4a4"/><rect x="689.5" y="97.5" width="2" height="2" fill="#d2d2d2"/><rect x="690.5" y="97.5" width="1" height="1" fill="#a4a4a4"/><rect x="689.5" y="101.5" width="2" height="2" fill="#d2d2d2"/><rect x="690.5" y="101.5" width="1" height="1" fill="#a4a4a4"/>
<rect x="702" y="87" width="2.5" height="13" fill="#2a3ad0"/><rect x="705" y="83" width="2.5" height="17" fill="#f0e020"/><rect x="708" y="85" width="2.5" height="15" fill="#20c040"/><rect x="711" y="89" width="2.5" height="11" fill="#20a0e0"/><rect x="714" y="90" width="2.5" height="10" fill="#40e0f0"/><path d="M700 98 Q708 84 716 96 L719 97" stroke="#d02020" stroke-width="1.5" fill="none"/>
<rect x="730.5" y="81.5" width="21" height="19" fill="#fff" stroke="#555" stroke-width="1"/><rect x="730.5" y="81.5" width="21" height="3" fill="#666"/><path d="M741 85 v15" stroke="#555" stroke-width="1"/><path d="M733 88h6M733 91h6M733 94h6M733 97h6M743.5 88h6M743.5 91h6M743.5 94h6M743.5 97h6" stroke="#555" stroke-width="1"/>
<rect x="758" y="73" width="1" height="33" fill="#cfcfcf"/><rect x="759" y="73" width="1" height="33" fill="#fdfdfd"/>
<rect x="763.5" y="77.5" width="2" height="2" fill="#d2d2d2"/><rect x="764.5" y="77.5" width="1" height="1" fill="#a4a4a4"/><rect x="763.5" y="81.5" width="2" height="2" fill="#d2d2d2"/><rect x="764.5" y="81.5" width="1" height="1" fill="#a4a4a4"/><rect x="763.5" y="85.5" width="2" height="2" fill="#d2d2d2"/><rect x="764.5" y="85.5" width="1" height="1" fill="#a4a4a4"/><rect x="763.5" y="89.5" width="2" height="2" fill="#d2d2d2"/><rect x="764.5" y="89.5" width="1" height="1" fill="#a4a4a4"/><rect x="763.5" y="93.5" width="2" height="2" fill="#d2d2d2"/><rect x="764.5" y="93.5" width="1" height="1" fill="#a4a4a4"/><rect x="763.5" y="97.5" width="2" height="2" fill="#d2d2d2"/><rect x="764.5" y="97.5" width="1" height="1" fill="#a4a4a4"/><rect x="763.5" y="101.5" width="2" height="2" fill="#d2d2d2"/><rect x="764.5" y="101.5" width="1" height="1" fill="#a4a4a4"/>
<path d="M777 98 L791 84" stroke="#6a6a90" stroke-width="2"/><circle cx="777" cy="98" r="2.6" fill="#7a7aa0"/><circle cx="784" cy="91" r="2.6" fill="#7a7aa0"/><circle cx="791.5" cy="83.5" r="2.6" fill="#7a7aa0"/>
<text x="812" y="87" font-family="Liberation Sans" font-weight="bold" font-size="8" fill="#505050">2</text><text x="812" y="94" font-family="Liberation Sans" font-weight="bold" font-size="8" fill="#505050">1</text><text x="811" y="101" font-family="Liberation Sans" font-weight="bold" font-size="8" fill="#505050">3</text><path d="M810 82 l-2 4 l3 -1 M819.5 90 l3 -3 l0 3" stroke="#d02020" stroke-width="1.3" fill="none"/>
<circle cx="838" cy="95" r="3" fill="#e8e020" stroke="#b0a810" stroke-width="0.5"/><circle cx="853.5" cy="85" r="3" fill="#e8e020" stroke="#b0a810" stroke-width="0.5"/><path d="M842 92.5 L849 88" stroke="#111" stroke-width="0.9"/><path d="M841.5 93 l1 -2.6 l1.6 2z M849.5 87.5 l-1 2.6 l-1.6 -2z" fill="#111"/>
<rect x="863" y="73" width="1" height="33" fill="#cfcfcf"/><rect x="864" y="73" width="1" height="33" fill="#fdfdfd"/>
<rect x="868.5" y="77.5" width="2" height="2" fill="#d2d2d2"/><rect x="869.5" y="77.5" width="1" height="1" fill="#a4a4a4"/><rect x="868.5" y="81.5" width="2" height="2" fill="#d2d2d2"/><rect x="869.5" y="81.5" width="1" height="1" fill="#a4a4a4"/><rect x="868.5" y="85.5" width="2" height="2" fill="#d2d2d2"/><rect x="869.5" y="85.5" width="1" height="1" fill="#a4a4a4"/><rect x="868.5" y="89.5" width="2" height="2" fill="#d2d2d2"/><rect x="869.5" y="89.5" width="1" height="1" fill="#a4a4a4"/><rect x="868.5" y="93.5" width="2" height="2" fill="#d2d2d2"/><rect x="869.5" y="93.5" width="1" height="1" fill="#a4a4a4"/><rect x="868.5" y="97.5" width="2" height="2" fill="#d2d2d2"/><rect x="869.5" y="97.5" width="1" height="1" fill="#a4a4a4"/><rect x="868.5" y="101.5" width="2" height="2" fill="#d2d2d2"/><rect x="869.5" y="101.5" width="1" height="1" fill="#a4a4a4"/>
<rect x="875.0" y="76.5" width="29.5" height="26.5" rx="3" fill="url(#pg)" stroke="#666" stroke-width="1.1"/>
<g transform="translate(878.5,80.5) scale(1.0)"><ellipse cx="11" cy="6.5" rx="10" ry="5.6" fill="#fff" stroke="#8c8c8c" stroke-width="1.9"/><ellipse cx="11" cy="6.3" rx="5.4" ry="4.7" fill="#7f9ad8"/><ellipse cx="11" cy="7" rx="3.4" ry="2.8" fill="#b4c4ec"/><circle cx="11" cy="3.4" r="1.4" fill="#111"/></g>
<rect x="906.5" y="76.5" width="29" height="26.5" rx="3" fill="url(#pg)" stroke="#666" stroke-width="1.1"/>
<g transform="translate(910,80.5) scale(1.0)"><ellipse cx="11" cy="6.5" rx="10" ry="5.6" fill="#fff" stroke="#8c8c8c" stroke-width="1.9"/><ellipse cx="11" cy="6.3" rx="5.4" ry="4.7" fill="#7f9ad8"/><ellipse cx="11" cy="7" rx="3.4" ry="2.8" fill="#b4c4ec"/><circle cx="11" cy="3.4" r="1.4" fill="#111"/></g>
<rect x="937.5" y="76.5" width="29" height="26.5" rx="3" fill="url(#pg)" stroke="#666" stroke-width="1.1"/>
<g transform="translate(941,80.5) scale(1.0)"><ellipse cx="11" cy="6.5" rx="10" ry="5.6" fill="#fff" stroke="#8c8c8c" stroke-width="1.9"/><ellipse cx="11" cy="6.3" rx="5.4" ry="4.7" fill="#7f9ad8"/><ellipse cx="11" cy="7" rx="3.4" ry="2.8" fill="#b4c4ec"/><circle cx="11" cy="3.4" r="1.4" fill="#111"/></g>
<rect x="968.5" y="76.5" width="29" height="26.5" rx="3" fill="url(#pg)" stroke="#666" stroke-width="1.1"/>
<g transform="translate(972,80.5) scale(1.0)"><ellipse cx="11" cy="6.5" rx="10" ry="5.6" fill="#fff" stroke="#8c8c8c" stroke-width="1.9"/><ellipse cx="11" cy="6.3" rx="5.4" ry="4.7" fill="#7f9ad8"/><ellipse cx="11" cy="7" rx="3.4" ry="2.8" fill="#b4c4ec"/><circle cx="11" cy="3.4" r="1.4" fill="#111"/></g>
<rect x="999.5" y="76.5" width="29" height="26.5" rx="3" fill="url(#pg)" stroke="#666" stroke-width="1.1"/>
<g transform="translate(1003,80.5) scale(1.0)"><ellipse cx="11" cy="6.5" rx="10" ry="5.6" fill="#fff" stroke="#8c8c8c" stroke-width="1.9"/><ellipse cx="11" cy="6.3" rx="5.4" ry="4.7" fill="#7f9ad8"/><ellipse cx="11" cy="7" rx="3.4" ry="2.8" fill="#b4c4ec"/><circle cx="11" cy="3.4" r="1.4" fill="#111"/></g>
<text x="884.5" y="101" font-family="Liberation Sans" font-weight="bold" font-size="9.5" fill="#3a3a3a">123</text>
<text x="924.5" y="101.5" font-family="Liberation Sans" font-size="11.5" fill="#111">E</text>
<text x="955.5" y="101.5" font-family="Liberation Sans" font-size="11.5" fill="#111">T</text>
<text x="985.5" y="101.5" font-family="Liberation Sans" font-size="11.5" fill="#111">C</text>
<text x="1004" y="101" font-family="Liberation Sans" font-weight="bold" font-size="9.5" fill="#3a3a3a">+/–</text>
<path d="M1034 88 Q1036 81 1042 82 Q1050 84 1054 90 L1052 97 Q1048 92 1044 91 L1040 95 Q1035 94 1034 88Z" fill="#8a8ad0"/><path d="M1048 92 v8 l2 -2 l2 3 l1 -0.5 l-2 -3 h3z" fill="#fff" stroke="#555" stroke-width="0.6"/>
<rect x="1061.0" y="76.5" width="29.5" height="26.5" rx="3" fill="url(#pg)" stroke="#666" stroke-width="1.1"/>
<g transform="translate(1064,80) scale(0.78)"><ellipse cx="11" cy="6.5" rx="10" ry="5.6" fill="#fff" stroke="#8c8c8c" stroke-width="1.9"/><ellipse cx="11" cy="6.3" rx="5.4" ry="4.7" fill="#7f9ad8"/><ellipse cx="11" cy="7" rx="3.4" ry="2.8" fill="#b4c4ec"/><circle cx="11" cy="3.4" r="1.4" fill="#111"/></g>
<path d="M1070 96 Q1072 89 1078 90 Q1085 92 1087 98 L1085 101 Q1081 96 1076 96 L1073 101 Q1070 100 1070 96Z" fill="#8a8ad0"/>
<g transform="translate(1094,79.5) scale(0.78)"><ellipse cx="11" cy="6.5" rx="10" ry="5.6" fill="#fff" stroke="#8c8c8c" stroke-width="1.9"/><ellipse cx="11" cy="6.3" rx="5.4" ry="4.7" fill="#7f9ad8"/><ellipse cx="11" cy="7" rx="3.4" ry="2.8" fill="#b4c4ec"/><circle cx="11" cy="3.4" r="1.4" fill="#111"/></g>
<path d="M1105 89 v12 M1107.5 89 v12 M1110 89 v12 M1112.5 89 v12 M1115 89 v12 M1104 90.5 h12 M1104 93 h12 M1104 95.5 h12 M1104 98 h12 M1104 100.5 h12" stroke="#777" stroke-width="0.8"/>
<path d="M1130.5 88.5 L1134.5 95" stroke="#151548" stroke-width="6.6" stroke-linecap="round"/><path d="M1137.5 84.5 L1143.5 89.5" stroke="#151548" stroke-width="6.6" stroke-linecap="round"/><path d="M1131 86 L1137 83" stroke="#3a3a80" stroke-width="3"/><path d="M1132.5 92 L1135 96" stroke="#8ab0f8" stroke-width="2.4" stroke-linecap="round"/><path d="M1140.5 88 L1144 90.5" stroke="#8ab0f8" stroke-width="2.4" stroke-linecap="round"/><path d="M1131 88 L1133 91 M1137 84.5 L1140 87" stroke="#5a5aa8" stroke-width="1.4"/>
</svg>
<!-- left tabs -->
<div class="a" style="left:18px;top:107px;width:1px;height:640px;background:#a0a0a0"></div>
<div class="vtab" style="top:110px;height:115px"><span style="margin-top:0px">Flow Model Browser</span></div><div class="vtab" style="top:227px;height:110px"><span style="margin-top:0px">Geometry Browser</span></div><div class="vtab" style="top:339px;height:129px"><span style="margin-top:4px">Thermal Model Browser</span></div><div class="vtab" style="top:469px;height:111px;background:#fff;width:19.5px;border-color:#a0a0a0"><span>Element Library</span></div><div class="vtab" style="top:580px;height:80px"><span style="margin-top:0px">Datum Planes</span></div><div class="vtab" style="top:661px;height:81px"><span style="margin-top:1.5px">Saved Views</span></div>
<!-- panel -->
<div class="a" style="left:19px;top:108px;width:393px;height:19px;background:#dadada;border-top:1px solid #e2e2e2"></div>
<div class="a" style="left:24px;top:112.5px;font:10.6px/12px 'Liberation Sans';white-space:nowrap">Element Library</div>
<svg style="left:382.5px;top:113px" width="10" height="10" viewBox="0 0 10 10"><rect x="3" y="0.5" width="6" height="5" fill="none" stroke="#000" stroke-width="1"/><rect x="3" y="0.5" width="6" height="1.5" fill="#000"/><rect x="0.5" y="3.5" width="6" height="5.5" fill="#dadada" stroke="#000" stroke-width="1"/><rect x="0.5" y="3.5" width="6" height="1.5" fill="#000"/></svg>
<svg style="left:398.5px;top:113.5px" width="9" height="9" viewBox="0 0 9 9"><path d="M1 1L8 8M8 1L1 8" stroke="#000" stroke-width="1.6"/></svg>
<div class="a" style="left:19px;top:129px;width:376px;height:618px;background:#fff;border-left:1px solid #a8a8a8;border-top:1px solid #e4e4e4"></div>
<div class="a" style="left:40px;top:130px;width:355px;height:17px;background:repeating-conic-gradient(#a2cd7c 0 25%,#d2e9bf 0 50%) 0 0/2px 2px"></div>
<div class="a" style="left:100px;top:278px;width:294px;height:20px;border:1px solid #d0d0d0;border-radius:2px;background:linear-gradient(#fafafa,#ececec)"></div>
<div class="row" style="left:43.0px;top:132px;font-weight:bold">FLOW</div>
<svg style="left:28px;top:135px" width="7" height="7" viewBox="0 0 7 7"><path d="M6 0 V6 H0Z" fill="#3c3c3c"/></svg>
<div class="row" style="left:63.5px;top:149px">Chambers</div>
<svg style="left:48px;top:152px" width="7" height="7" viewBox="0 0 7 7"><path d="M6 0 V6 H0Z" fill="#3c3c3c"/></svg>
<div class="row" style="left:83.5px;top:166px">Boundary</div>
<svg style="left:68px;top:169px" width="7" height="7" viewBox="0 0 7 7"><path d="M6 0 V6 H0Z" fill="#3c3c3c"/></svg>
<div class="row" style="left:125.3px;top:185px">Plenum</div>
<svg style="left:103px;top:183px" width="16" height="16" viewBox="0 0 16 16"><polygon points="5,0.5 11,0.5 15.5,5 15.5,11 11,15.5 5,15.5 0.5,11 0.5,5" fill="#f7f27e" stroke="#9a8c2a" stroke-width="1"/><polygon points="5.5,2 10.5,2 14,5.5 14,10.5 10.5,14 5.5,14 2,10.5 2,5.5" fill="none" stroke="#fffbd0" stroke-width="0.8"/><text x="8" y="12" text-anchor="middle" font-family="Liberation Serif" font-weight="bold" font-size="11.5" fill="#efe040" stroke="#2a2a10" stroke-width="1.1">P</text></svg>
<div class="row" style="left:125.3px;top:205px">Momentum</div>
<svg style="left:103px;top:203px" width="16" height="16" viewBox="0 0 16 16"><polygon points="5,0.5 11,0.5 15.5,5 15.5,11 11,15.5 5,15.5 0.5,11 0.5,5" fill="#f7f27e" stroke="#9a8c2a" stroke-width="1"/><polygon points="5.5,2 10.5,2 14,5.5 14,10.5 10.5,14 5.5,14 2,10.5 2,5.5" fill="none" stroke="#fffbd0" stroke-width="0.8"/><text x="8" y="12" text-anchor="middle" font-family="Liberation Serif" font-weight="bold" font-size="11.5" fill="#efe040" stroke="#2a2a10" stroke-width="1.1">M</text></svg>
<div class="row" style="left:125.3px;top:225px">Elevation</div>
<svg style="left:103px;top:223px" width="16" height="16" viewBox="0 0 16 16"><polygon points="5,0.5 11,0.5 15.5,5 15.5,11 11,15.5 5,15.5 0.5,11 0.5,5" fill="#f7f27e" stroke="#9a8c2a" stroke-width="1"/><polygon points="5.5,2 10.5,2 14,5.5 14,10.5 10.5,14 5.5,14 2,10.5 2,5.5" fill="none" stroke="#fffbd0" stroke-width="0.8"/><text x="8" y="12" text-anchor="middle" font-family="Liberation Serif" font-weight="bold" font-size="11.5" fill="#efe040" stroke="#2a2a10" stroke-width="1.1">E</text></svg>
<div class="row" style="left:125.3px;top:245px">Inertial</div>
<svg style="left:103px;top:243px" width="16" height="16" viewBox="0 0 16 16"><polygon points="5,0.5 11,0.5 15.5,5 15.5,11 11,15.5 5,15.5 0.5,11 0.5,5" fill="#f7f27e" stroke="#9a8c2a" stroke-width="1"/><polygon points="5.5,2 10.5,2 14,5.5 14,10.5 10.5,14 5.5,14 2,10.5 2,5.5" fill="none" stroke="#fffbd0" stroke-width="0.8"/><text x="8" y="12" text-anchor="middle" font-family="Liberation Serif" font-weight="bold" font-size="11.5" fill="#efe040" stroke="#2a2a10" stroke-width="1.1">I</text></svg>
<div class="row" style="left:83.5px;top:263px">Non-Boundary</div>
<svg style="left:68px;top:266px" width="7" height="7" viewBox="0 0 7 7"><path d="M6 0 V6 H0Z" fill="#3c3c3c"/></svg>
<div class="row" style="left:125.3px;top:282px">Plenum</div>
<svg style="left:103px;top:279px" width="16" height="16" viewBox="0 0 16 16"><circle cx="8" cy="8" r="6.6" fill="#f4f6fb" stroke="#5a6a80" stroke-width="1.1"/><text x="8" y="11.8" text-anchor="middle" font-family="Liberation Serif" font-weight="bold" font-size="10.5" fill="#1c2d4a">P</text></svg>
<div class="row" style="left:125.3px;top:302px">Momentum</div>
<svg style="left:103px;top:299px" width="16" height="16" viewBox="0 0 16 16"><circle cx="8" cy="8" r="6.6" fill="#fff" stroke="#1a2ad0" stroke-width="1.1"/><text x="8" y="11.8" text-anchor="middle" font-family="Liberation Serif" font-weight="bold" font-size="10.5" fill="#1020c8">M</text></svg>
<div class="row" style="left:125.3px;top:322px">Elevation</div>
<svg style="left:103px;top:319px" width="16" height="16" viewBox="0 0 16 16"><circle cx="8" cy="8" r="6.6" fill="#fff" stroke="#707070" stroke-width="1.1"/><text x="8" y="11.8" text-anchor="middle" font-family="Liberation Serif" font-weight="bold" font-size="10.5" fill="#303030">E</text></svg>
<div class="row" style="left:125.3px;top:342px">Inertial</div>
<svg style="left:103px;top:339px" width="16" height="16" viewBox="0 0 16 16"><circle cx="8" cy="8" r="6.6" fill="#fff" stroke="#c82020" stroke-width="1.1"/><text x="8" y="11.8" text-anchor="middle" font-family="Liberation Serif" font-weight="bold" font-size="10.5" fill="#d01818">I</text></svg>
<div class="row" style="left:125.3px;top:362px">Vortex Chamber</div>
<svg style="left:103px;top:359px" width="16" height="16" viewBox="0 0 16 16"><circle cx="8" cy="8" r="6.6" fill="#fff" stroke="#c82020" stroke-width="1.1"/><text x="8" y="11.8" text-anchor="middle" font-family="Liberation Serif" font-weight="bold" font-size="10.5" fill="#d01818">V</text></svg>
<div class="row" style="left:63.4px;top:380px">Compressible Gas Elements</div>
<svg style="left:48px;top:383px" width="7" height="7" viewBox="0 0 7 7"><path d="M6 0 V6 H0Z" fill="#3c3c3c"/></svg>
<div class="row" style="left:105.5px;top:399px">Blank End</div>
<svg style="left:83px;top:397px" width="16" height="16" viewBox="0 0 16 16"><defs><linearGradient id="bk" x1="0" y1="0" x2="0" y2="1"><stop offset="0" stop-color="#222"/><stop offset="0.6" stop-color="#111"/><stop offset="0.8" stop-color="#777"/><stop offset="1" stop-color="#333"/></linearGradient></defs><rect x="1.5" y="2" width="6.5" height="13.5" fill="url(#bk)"/><rect x="8.5" y="2" width="6" height="13.5" fill="url(#bk)"/></svg>
<div class="row" style="left:105.5px;top:419px">Discrete Loss</div>
<svg style="left:83px;top:417px" width="16" height="16" viewBox="0 0 16 16"><rect x="0.5" y="0.5" width="15" height="15" fill="#2ee82e" stroke="#0a6a0a"/><circle cx="8" cy="8" r="5.5" fill="#fff"/><path d="M1.5 8h4M10.5 8h4" stroke="#333" stroke-width="0.8"/><text x="8" y="10.5" text-anchor="middle" font-size="7" font-family="Liberation Sans" fill="#111">D</text></svg>
<div class="row" style="left:105.5px;top:439px">Elevation Element</div>
<svg style="left:83px;top:437px" width="16" height="16" viewBox="0 0 16 16"><rect x="0.5" y="0.5" width="15" height="15" fill="#2ee82e" stroke="#0a6a0a"/><circle cx="8" cy="8" r="5.5" fill="#fff"/><path d="M1.5 8h4M10.5 8h4" stroke="#333" stroke-width="0.8"/><text x="8" y="10.5" text-anchor="middle" font-size="7" font-family="Liberation Sans" fill="#111">D</text></svg>
<div class="row" style="left:105.5px;top:459px">Fluid Source</div>
<svg style="left:83px;top:457px" width="16" height="16" viewBox="0 0 16 16"><defs><linearGradient id="dr" x1="0" y1="0" x2="1" y2="1"><stop offset="0" stop-color="#6ac6ff"/><stop offset="1" stop-color="#0a5cc8"/></linearGradient></defs><path d="M8 1 C9 5 12 7 12 10.5 A4 4 0 0 1 4 10.5 C4 7 7 5 8 1Z" fill="url(#dr)"/><path d="M6 9.5 q0 2 1.5 3" stroke="#cdeeff" stroke-width="1" fill="none"/></svg>
<div class="row" style="left:105.5px;top:479px">Fuel Source</div>
<svg style="left:83px;top:477px" width="16" height="16" viewBox="0 0 16 16"><path d="M1 2 q4 -1 6 2" stroke="#999" stroke-width="1.2" fill="none"/><path d="M6 4 l4 1 l3 7 l-1 3 l-2 -2 l-3 -3 z" fill="#d02020"/><path d="M9 9 l2 4" stroke="#400" stroke-width="1"/></svg>
<div class="row" style="left:105.5px;top:499px">Gas Nozzle</div>
<svg style="left:83px;top:497px" width="16" height="16" viewBox="0 0 16 16"><defs><linearGradient id="nz" x1="0" y1="0" x2="1" y2="0"><stop offset="0" stop-color="#3ec81e"/><stop offset="0.45" stop-color="#f4e640"/><stop offset="1" stop-color="#e83a10"/></linearGradient></defs><path d="M0 5 q8 3 16 0 v6 q-8 -3 -16 0z" fill="url(#nz)"/></svg>
<div class="row" style="left:105.5px;top:519px">Heater-Cooler</div>
<svg style="left:83px;top:517px" width="16" height="16" viewBox="0 0 16 16"><path d="M0 9 h4" stroke="#b04030" stroke-width="1"/><circle cx="8.5" cy="9" r="5" fill="#111"/><path d="M7 11 l5 -6 l2 -3" stroke="#e05030" stroke-width="1" fill="none"/><circle cx="7" cy="10" r="1.2" fill="#2a6ad0"/></svg>
<div class="row" style="left:83.2px;top:537px">Accumulators</div>
<svg style="left:69px;top:539px" width="7" height="10" viewBox="0 0 7 10"><path d="M0.5 0.5 L5 4.5 L0.5 8.5Z" fill="#fff" stroke="#8a8a8a" stroke-width="1"/></svg>
<div class="row" style="left:83.2px;top:554px">Bends</div>
<svg style="left:69px;top:556px" width="7" height="10" viewBox="0 0 7 10"><path d="M0.5 0.5 L5 4.5 L0.5 8.5Z" fill="#fff" stroke="#8a8a8a" stroke-width="1"/></svg>
<div class="row" style="left:83.2px;top:571px">Combustion Modeling</div>
<svg style="left:69px;top:573px" width="7" height="10" viewBox="0 0 7 10"><path d="M0.5 0.5 L5 4.5 L0.5 8.5Z" fill="#fff" stroke="#8a8a8a" stroke-width="1"/></svg>
<div class="row" style="left:83.2px;top:588px">Cylinders</div>
<svg style="left:69px;top:590px" width="7" height="10" viewBox="0 0 7 10"><path d="M0.5 0.5 L5 4.5 L0.5 8.5Z" fill="#fff" stroke="#8a8a8a" stroke-width="1"/></svg>
<div class="row" style="left:83.2px;top:605px">Expansions and Contractions</div>
<svg style="left:69px;top:607px" width="7" height="10" viewBox="0 0 7 10"><path d="M0.5 0.5 L5 4.5 L0.5 8.5Z" fill="#fff" stroke="#8a8a8a" stroke-width="1"/></svg>
<div class="row" style="left:83.2px;top:622px">Fans and Compressors</div>
<svg style="left:69px;top:624px" width="7" height="10" viewBox="0 0 7 10"><path d="M0.5 0.5 L5 4.5 L0.5 8.5Z" fill="#fff" stroke="#8a8a8a" stroke-width="1"/></svg>
<div class="row" style="left:83.2px;top:639px">Flow Elements</div>
<svg style="left:69px;top:641px" width="7" height="10" viewBox="0 0 7 10"><path d="M0.5 0.5 L5 4.5 L0.5 8.5Z" fill="#fff" stroke="#8a8a8a" stroke-width="1"/></svg>
<div class="row" style="left:83.2px;top:656px">Junctions</div>
<svg style="left:69px;top:658px" width="7" height="10" viewBox="0 0 7 10"><path d="M0.5 0.5 L5 4.5 L0.5 8.5Z" fill="#fff" stroke="#8a8a8a" stroke-width="1"/></svg>
<div class="row" style="left:83.2px;top:673px">Orifice Plates</div>
<svg style="left:69px;top:675px" width="7" height="10" viewBox="0 0 7 10"><path d="M0.5 0.5 L5 4.5 L0.5 8.5Z" fill="#fff" stroke="#8a8a8a" stroke-width="1"/></svg>
<div class="row" style="left:83.2px;top:690px">Orifices and Generic Losses</div>
<svg style="left:69px;top:692px" width="7" height="10" viewBox="0 0 7 10"><path d="M0.5 0.5 L5 4.5 L0.5 8.5Z" fill="#fff" stroke="#8a8a8a" stroke-width="1"/></svg>
<div class="row" style="left:83.2px;top:707px">Seals</div>
<svg style="left:69px;top:709px" width="7" height="10" viewBox="0 0 7 10"><path d="M0.5 0.5 L5 4.5 L0.5 8.5Z" fill="#fff" stroke="#8a8a8a" stroke-width="1"/></svg>
<div class="row" style="left:83.2px;top:724px">Thermal Management</div>
<svg style="left:69px;top:726px" width="7" height="10" viewBox="0 0 7 10"><path d="M0.5 0.5 L5 4.5 L0.5 8.5Z" fill="#fff" stroke="#8a8a8a" stroke-width="1"/></svg>
<div class="row" style="left:83.2px;top:741px">Tubes</div>
<svg style="left:69px;top:743px" width="7" height="10" viewBox="0 0 7 10"><path d="M0.5 0.5 L5 4.5 L0.5 8.5Z" fill="#fff" stroke="#8a8a8a" stroke-width="1"/></svg>
<!-- scrollbar -->
<div class="a" style="left:395px;top:129px;width:17px;height:618px;background:#ececec;border-left:1px solid #dedede"></div>
<svg style="left:399px;top:136px" width="9" height="6" viewBox="0 0 9 6"><path d="M0.5 5.5 L4.5 1 L8.5 5.5Z" fill="#444"/></svg>
<div class="a" style="left:395px;top:148px;width:15px;height:599px;border:1px solid #b0b0b0;border-radius:2px;background:linear-gradient(90deg,#f4f4f4 0%,#e6e6e6 45%,#d2d2d2 100%)"></div>
<div class="a" style="left:400px;top:442px;width:6px;height:7px;background:repeating-linear-gradient(180deg,#666 0 1px,transparent 1px 3px)"></div>
<div class="a" style="left:412px;top:107px;width:1px;height:640px;background:#c0c0c0"></div>
<!-- right tab -->
<svg style="left:414px;top:106px" width="19" height="155" viewBox="0 0 19 155"><path d="M18.5 1.2 L5.5 4.2 Q2.5 5.3 2.5 8 V143.5 Q2.5 146.5 5.5 147.5 L18.5 151.5Z" fill="#fff" stroke="#111" stroke-width="1.1"/></svg>
<div class="a" style="left:424px;top:183px;transform:translate(-50%,-50%) rotate(-90deg);font:10.7px/12px 'Liberation Sans';white-space:nowrap">Flow and Thermal Network</div>
<!-- canvas -->
<div class="a" style="left:432px;top:107px;width:717px;height:640px;background:#0066ff"></div>
<div class="lbl" style="left:434.29999999999995px;top:383.7px;"><b>PL</b> 1</div><div class="lbl" style="left:434.29999999999995px;top:397.7px;">Fixed</div><div class="lbl" style="left:434.29999999999995px;top:411.7px;">Boundary Plenum</div>
<svg style="left:521.5px;top:425px" width="26" height="26" viewBox="0 0 26 26"><polygon points="25.01,17.97 17.97,25.01 8.03,25.01 0.99,17.97 0.99,8.03 8.03,0.99 17.97,0.99 25.01,8.03" fill="#faf25c" stroke="#fff8a0" stroke-width="1"/><text x="12.8" y="19.2" text-anchor="middle" font-family="Liberation Sans" font-weight="bold" font-size="16" fill="#1a1a1a">P</text></svg>
<div class="lbl" style="left:920px;top:241.7px;"><b>PL</b> 2</div><div class="lbl" style="left:920px;top:255.7px;">Fixed</div><div class="lbl" style="left:920px;top:269.7px;">Boundary Plenum</div>
<svg style="left:1008px;top:282.6px" width="26" height="26" viewBox="0 0 26 26"><polygon points="25.01,17.97 17.97,25.01 8.03,25.01 0.99,17.97 0.99,8.03 8.03,0.99 17.97,0.99 25.01,8.03" fill="#faf25c" stroke="#fff8a0" stroke-width="1"/><text x="12.8" y="19.2" text-anchor="middle" font-family="Liberation Sans" font-weight="bold" font-size="16" fill="#1a1a1a">P</text></svg>
<div class="lbl" style="left:921.1px;top:493.7px;"><b>PL</b> 3</div><div class="lbl" style="left:921.1px;top:507.7px;">Fixed</div><div class="lbl" style="left:921.1px;top:521.7px;">Boundary Plenum</div>
<svg style="left:1008.5px;top:534.6px" width="26" height="26" viewBox="0 0 26 26"><polygon points="25.01,17.97 17.97,25.01 8.03,25.01 0.99,17.97 0.99,8.03 8.03,0.99 17.97,0.99 25.01,8.03" fill="#faf25c" stroke="#fff8a0" stroke-width="1"/><text x="12.8" y="19.2" text-anchor="middle" font-family="Liberation Sans" font-weight="bold" font-size="16" fill="#1a1a1a">P</text></svg>
<div class="lbl" style="left:770.8px;top:396.7px;"><b>PL</b> 4</div><div class="lbl" style="left:770.8px;top:410.7px;">Plenum</div>
<svg style="left:859px;top:426px" width="24" height="24" viewBox="0 0 24 24"><defs><radialGradient id="ball" cx="0.5" cy="0.6" r="0.55"><stop offset="0" stop-color="#ffffff"/><stop offset="0.4" stop-color="#e4e2da"/><stop offset="0.8" stop-color="#9a9890"/><stop offset="1" stop-color="#6a6a6a"/></radialGradient></defs><circle cx="12" cy="12" r="11.8" fill="url(#ball)"/><path d="M9.5 17.5 Q8 15.5 9.2 13.5 V8 H13.5 Q16.2 8.3 15.8 10.8 Q15.3 13 12.3 12.8 H9.2" fill="none" stroke="#111" stroke-width="2.3"/></svg>
<svg style="left:470px;top:676px" width="70" height="64" viewBox="0 0 70 64">
<path d="M12 56 V20" stroke="#10c010" stroke-width="3"/><path d="M8 24 L12 15 L16 24Z" fill="#10c010"/>
<path d="M12 55.7 H46" stroke="#d81818" stroke-width="3"/><path d="M44 51.5 L52 55.7 L44 60Z" fill="#d81818"/>
<circle cx="12" cy="55.7" r="4" fill="#0a10a0"/>
<text x="14" y="12.3" font-family="Liberation Serif" font-size="12.5" fill="#e8e8d8">Y</text>
<text x="54.5" y="55.7" font-family="Liberation Serif" font-size="12.5" fill="#e8e8d8">X</text>
<text x="9" y="53" font-family="Liberation Serif" font-size="7" fill="#e8e8d8">Z</text>
</svg>
</body></html>
